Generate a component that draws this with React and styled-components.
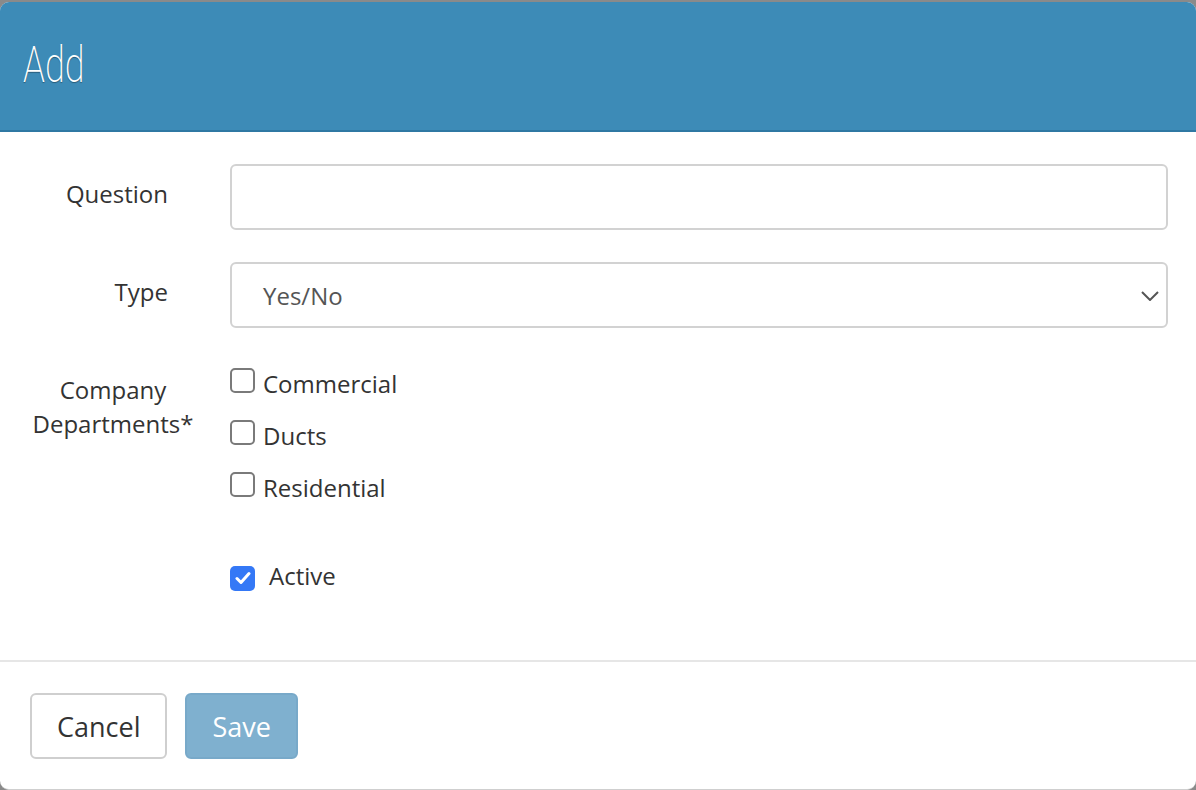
import styled, { createGlobalStyle } from 'styled-components'

const GlobalStyle = createGlobalStyle`
  html, body {
    margin: 0;
    padding: 0;
    background: #8a8a8a;
  }
  body {
    font-family: 'Open Sans', 'Liberation Sans', sans-serif;
  }
`

export default function App() {
  const departments = [
    { id: 1, name: 'Commercial' },
    { id: 2, name: 'Ducts' },
    { id: 3, name: 'Residential' },
  ]

  return (
    <>
      <GlobalStyle />
      <Modal>
        <Header>
          <Title>Add</Title>
        </Header>
        <Body>
          <Row>
            <Label>Question</Label>
            <TextInput type="text" />
          </Row>
          <Row>
            <Label>Type</Label>
            <SelectBox>
              <span>Yes/No</span>
              <svg width="18" height="10" viewBox="0 0 18 10">
                <polyline points="1,1 9,9 17,1" fill="none" stroke="#555" strokeWidth="2" />
              </svg>
            </SelectBox>
          </Row>
          <Row $top $space={8}>
            <DeptLabel>
              Company
              <br />
              Departments*
            </DeptLabel>
            <CheckList>
              {departments.map((item) => (
                <CheckRow key={item.id}>
                  <Box />
                  {item.name}
                </CheckRow>
              ))}
            </CheckList>
          </Row>
          <Row $top>
            <span />
            <ActiveRow>
              <Box $checked>
                <svg width="16" height="14" viewBox="0 0 16 14">
                  <polyline
                    points="2,7.5 6,11.5 14,2.5"
                    fill="none"
                    stroke="#fff"
                    strokeWidth="3"
                    strokeLinecap="round"
                    strokeLinejoin="round"
                  />
                </svg>
              </Box>
              Active
            </ActiveRow>
          </Row>
        </Body>
        <Footer>
          <Button>Cancel</Button>
          <Button $primary>Save</Button>
        </Footer>
      </Modal>
    </>
  )
}

const Modal = styled.div`
  margin-top: 2px;
  height: 787px;
  display: flex;
  flex-direction: column;
  background: #fff;
  border-radius: 9px;
  border-bottom: 1px solid #cfcfcf;
  overflow: hidden;
`

const Header = styled.div`
  height: 128px;
  display: flex;
  align-items: center;
  padding-left: 23px;
  background: #3d8bb7;
  border-bottom: 2px solid #2f78a3;
`

const Title = styled.h1`
  margin: 0;
  font-family: Roboto, 'Open Sans', sans-serif;
  font-weight: 200;
  font-size: 50px;
  line-height: 1;
  color: #fff;
  transform: scaleX(0.72);
  transform-origin: left center;
  text-shadow: 0 1px 1px rgba(0, 0, 0, 0.35);
  margin-top: -2px;
`

const Body = styled.div`
  flex: 1;
  padding: 32px 28px 0 30px;
  display: flex;
  flex-direction: column;
  gap: 32px;
`

const Row = styled.div`
  display: grid;
  grid-template-columns: 138px 1fr;
  column-gap: 62px;
  align-items: ${(p) => (p.$top ? 'start' : 'center')};
  margin-top: ${(p) => p.$space || 0}px;
`

const Label = styled.label`
  font-size: 24px;
  color: #333;
  text-align: right;
  line-height: 34px;
  margin-top: -6px;
`

const DeptLabel = styled.label`
  font-size: 24px;
  color: #333;
  line-height: 34px;
  text-align: center;
  width: 166px;
  margin-top: 5px;
`

const TextInput = styled.input`
  box-sizing: border-box;
  height: 66px;
  width: 100%;
  border: 2px solid #d2d2d2;
  border-radius: 6px;
  outline: none;
  font-family: inherit;
  font-size: 24px;
  padding: 0 30px;
`

const SelectBox = styled.div`
  box-sizing: border-box;
  height: 66px;
  border: 2px solid #d2d2d2;
  border-radius: 6px;
  display: flex;
  align-items: center;
  justify-content: space-between;
  padding: 0 7px 0 31px;
  font-size: 24px;
  color: #555;

  svg {
    margin-top: 2px;
  }
`

const CheckList = styled.div`
  display: flex;
  flex-direction: column;
  gap: 18px;
  margin-top: -1px;
`

const CheckRow = styled.div`
  display: flex;
  align-items: flex-start;
  gap: 8px;
  font-size: 24px;
  line-height: 34px;
  color: #333;
`

const ActiveRow = styled(CheckRow)`
  gap: 14px;
  margin-top: 22px;
  align-items: center;
`

const Box = styled.span`
  box-sizing: border-box;
  flex: none;
  width: 25px;
  height: 25px;
  margin-top: ${(p) => (p.$checked ? '4px' : '1px')};
  border-radius: 5px;
  border: ${(p) => (p.$checked ? 'none' : '2px solid #7a7a7a')};
  background: ${(p) => (p.$checked ? '#3478f6' : '#fff')};
  display: flex;
  align-items: center;
  justify-content: center;
`

const Footer = styled.div`
  border-top: 2px solid #e6e6e6;
  padding: 31px 30px 30px;
  display: flex;
  gap: 18px;
`

const Button = styled.button`
  box-sizing: border-box;
  height: 66px;
  padding: 0 25px;
  border-radius: 6px;
  font-family: 'Open Sans', sans-serif;
  font-size: 27px;
  border: 2px solid ${(p) => (p.$primary ? '#78a9c9' : '#cfcfcf')};
  background: ${(p) => (p.$primary ? '#7fb0cf' : '#fff')};
  color: ${(p) => (p.$primary ? '#fff' : '#333')};
`
